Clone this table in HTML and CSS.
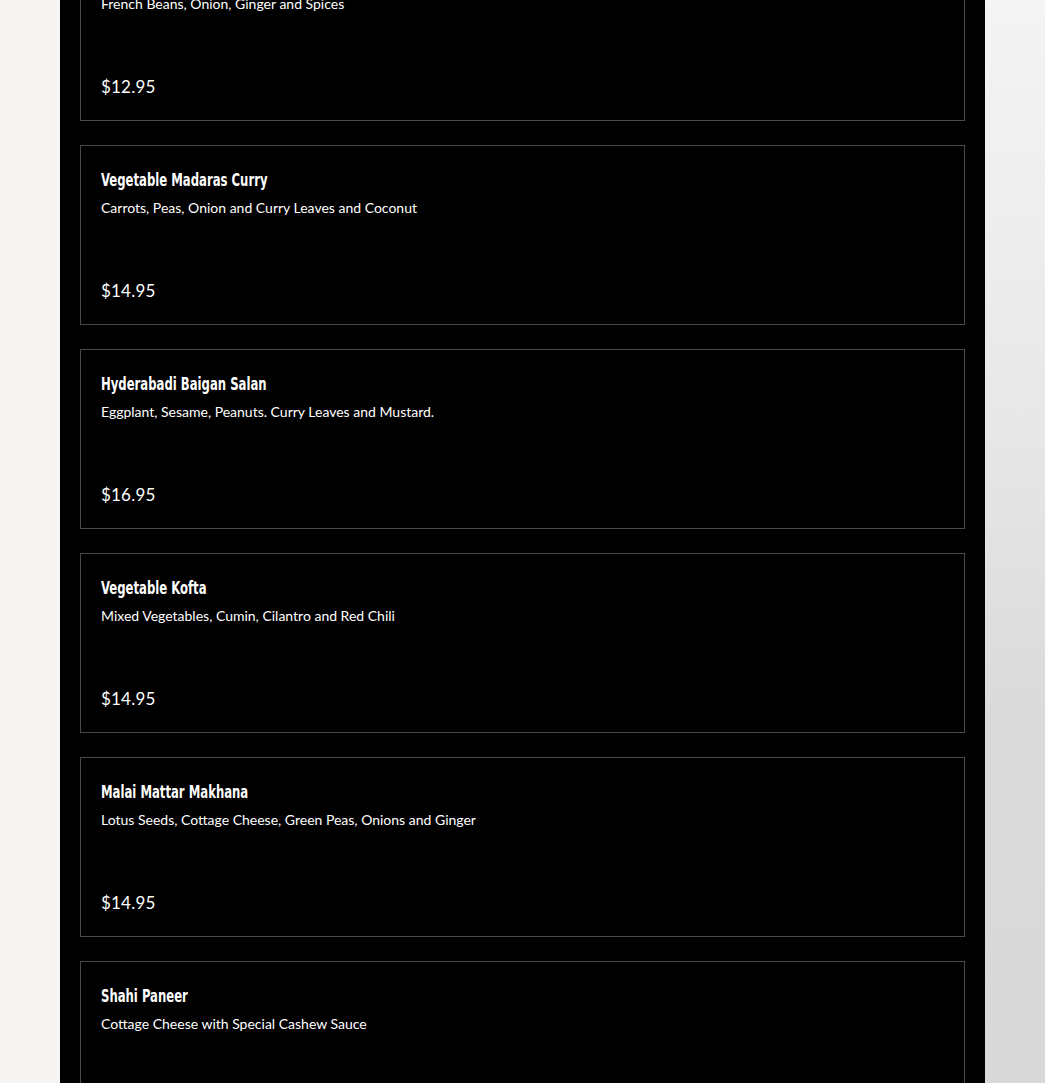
FILE: index.html
```html
<!DOCTYPE html>
<html lang="en">
<head>
<meta charset="utf-8">
<title>Menu</title>
<link rel="stylesheet" href="styles.css">
</head>
<body>
<main class="panel">
  <section class="card">
    <h3 class="title">Bhindi Masala</h3>
    <p class="desc">French Beans, Onion, Ginger and Spices</p>
    <p class="price">$12.95</p>
  </section>
  <section class="card">
    <h3 class="title">Vegetable Madaras Curry</h3>
    <p class="desc">Carrots, Peas, Onion and Curry Leaves and Coconut</p>
    <p class="price">$14.95</p>
  </section>
  <section class="card">
    <h3 class="title">Hyderabadi Baigan Salan</h3>
    <p class="desc">Eggplant, Sesame, Peanuts. Curry Leaves and Mustard.</p>
    <p class="price">$16.95</p>
  </section>
  <section class="card">
    <h3 class="title">Vegetable Kofta</h3>
    <p class="desc">Mixed Vegetables, Cumin, Cilantro and Red Chili</p>
    <p class="price">$14.95</p>
  </section>
  <section class="card">
    <h3 class="title">Malai Mattar Makhana</h3>
    <p class="desc">Lotus Seeds, Cottage Cheese, Green Peas, Onions and Ginger</p>
    <p class="price">$14.95</p>
  </section>
  <section class="card">
    <h3 class="title">Shahi Paneer</h3>
    <p class="desc">Cottage Cheese with Special Cashew Sauce</p>
    <p class="price">$14.95</p>
  </section>
</main>
</body>
</html>
```
FILE: styles.css
```css
html, body {
  margin: 0;
  padding: 0;
}
body {
  min-height: 1083px;
  overflow: hidden;
  background-color: #eeeeee;
  background-image:
    linear-gradient(to right, #f6f5f3 0, #f6f5f3 50%, transparent 50%),
    linear-gradient(to bottom, #f4f4f4 0%, #e8e8e8 35%, #dadada 60%, #d8d8d8 100%);
  font-family: "Lato", "Open Sans", sans-serif;
}
.panel {
  width: 925px;
  margin: -59px 0 0 60px;
  padding: 0 20px 40px;
  box-sizing: border-box;
  background: #000;
  display: flex;
  flex-direction: column;
  gap: 24px;
}
.card {
  height: 180px;
  box-sizing: border-box;
  border: 1px solid #4a4a4a;
  padding: 22px 20px 22px;
  display: flex;
  flex-direction: column;
  align-items: flex-start;
  color: #fff;
}
.title {
  margin: 0;
  font-family: "DejaVu Sans Condensed", "DejaVu Sans", sans-serif;
  font-weight: 700;
  font-size: 18px;
  line-height: 24px;
  white-space: nowrap;
  transform: scaleX(0.72);
  transform-origin: left center;
}
.desc {
  margin: 6px 0 0;
  font-size: 14px;
  line-height: 20px;
  font-weight: 400;
}
.price {
  margin: auto 0 0;
  font-size: 17px;
  line-height: 22px;
  letter-spacing: 0.2px;
}
```
